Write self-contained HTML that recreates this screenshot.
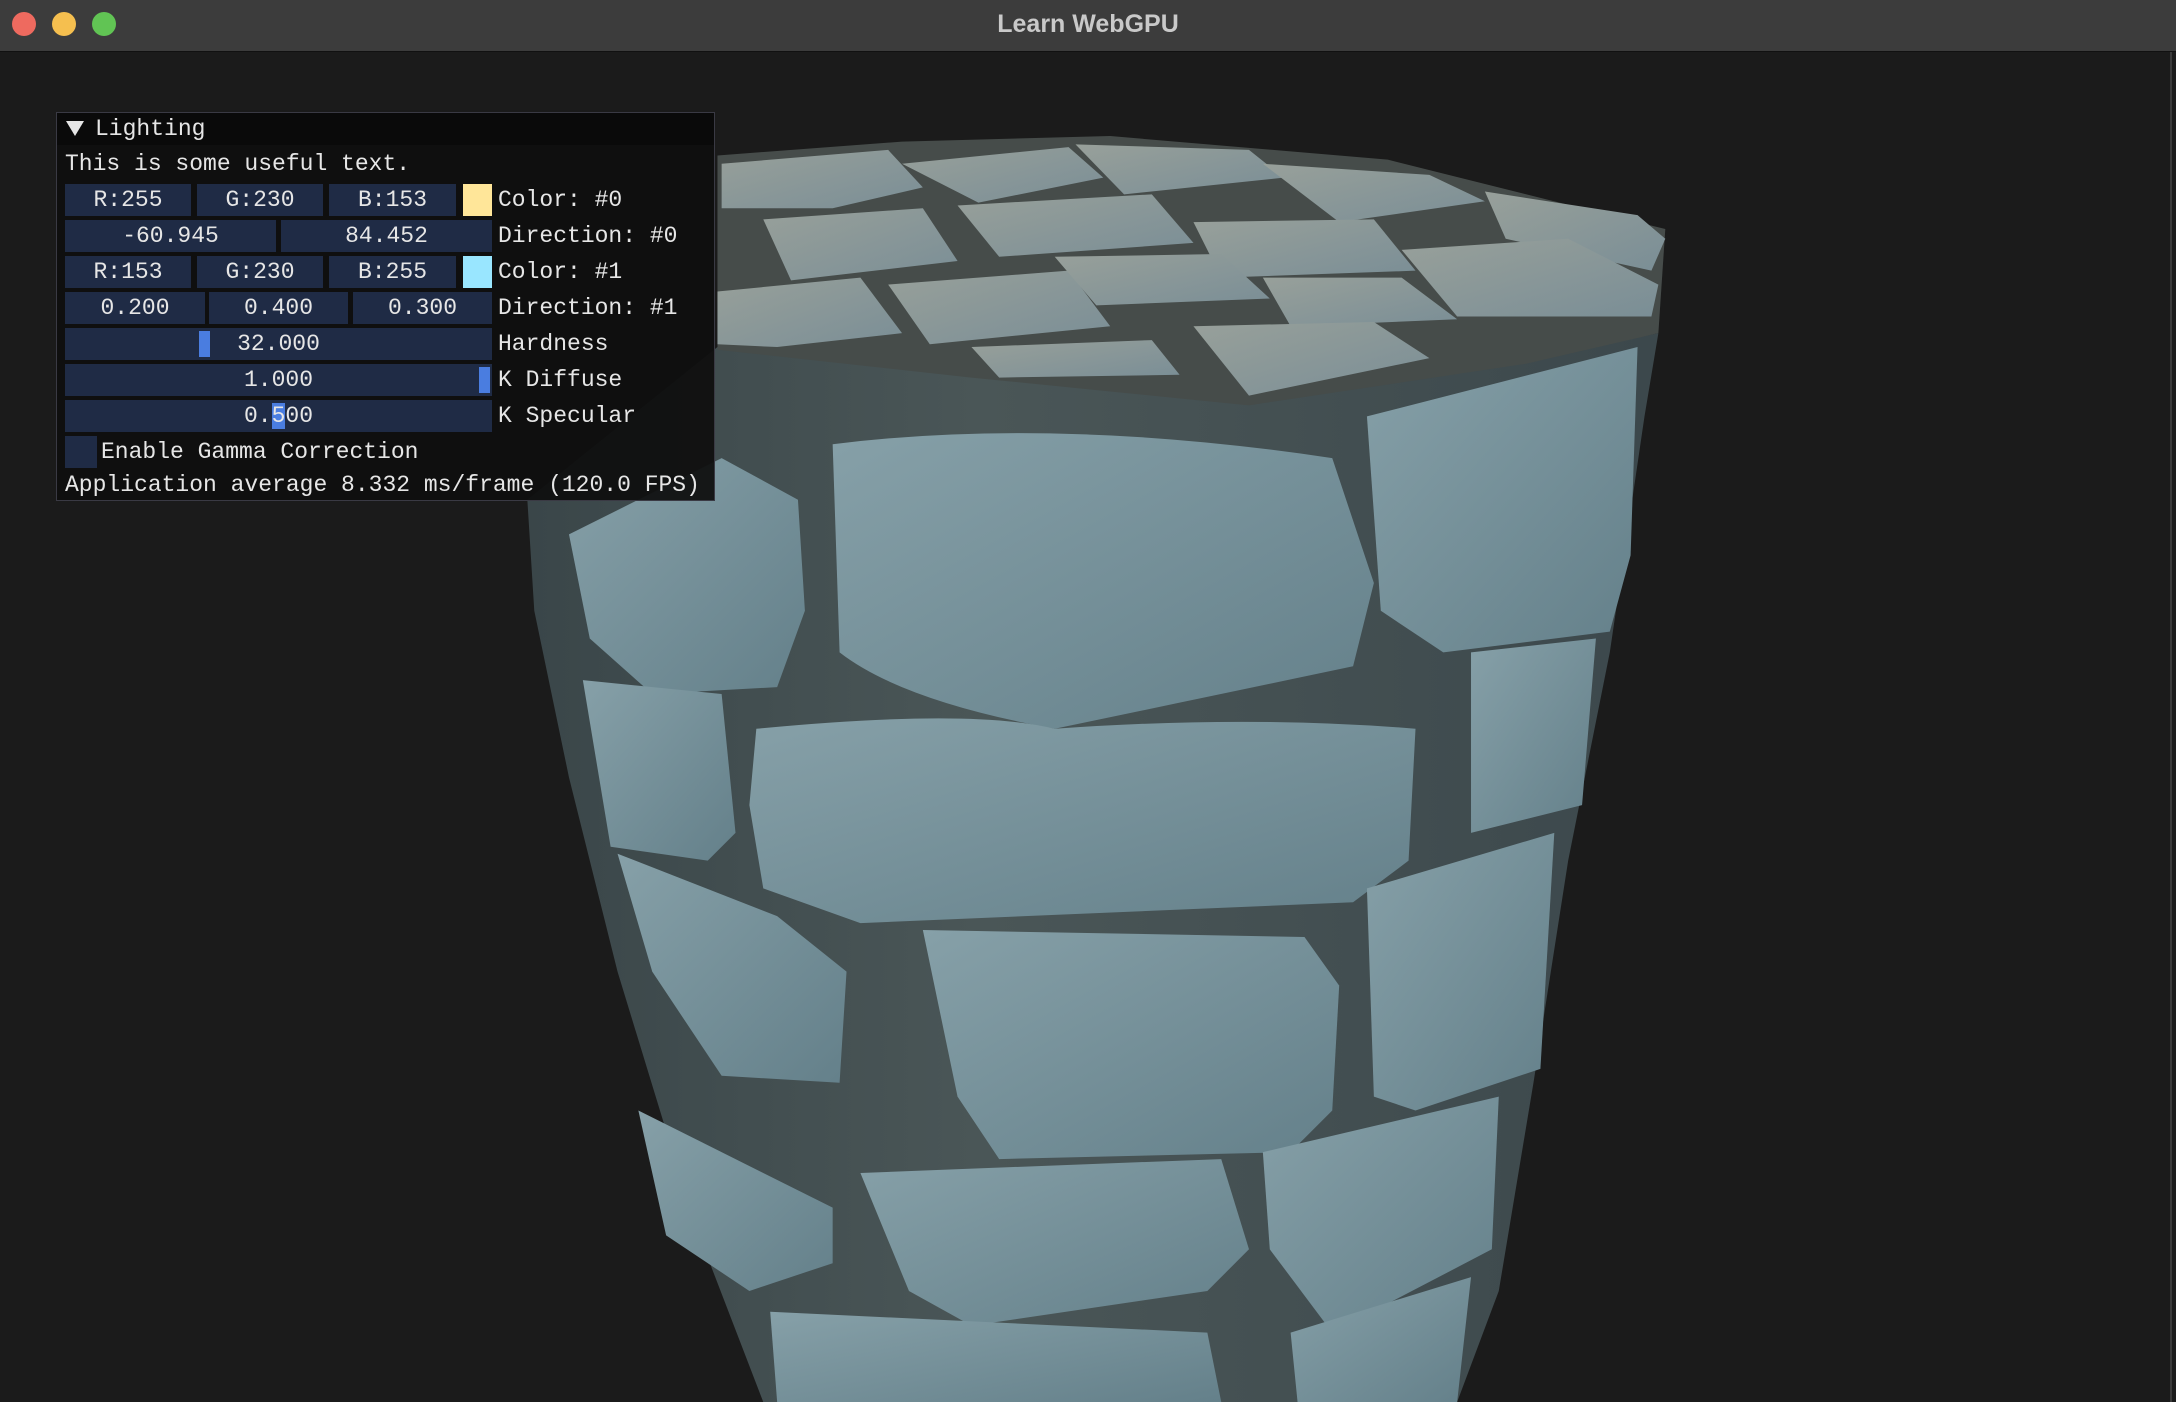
<!DOCTYPE html>
<html><head><meta charset="utf-8"><style>
html,body{margin:0;padding:0;width:2176px;height:1402px;overflow:hidden;background:#1b1b1b;}
.tb{position:absolute;left:0;top:0;width:2176px;height:51px;background:#3c3c3c;border-bottom:1px solid #111;}
.tb .t{position:absolute;left:0;width:2176px;top:10px;text-align:center;color:#c9c9c9;font:bold 25px "Liberation Sans",sans-serif;}
.dot{position:absolute;top:12px;width:24px;height:24px;border-radius:50%;}
svg.scene{position:absolute;left:0;top:0;}
.panel{position:absolute;left:56px;top:112px;width:659px;height:389px;background:rgba(15,15,15,0.94);border:1px solid #3a3a44;box-sizing:border-box;font:23px "Liberation Mono",monospace;color:#e6e6e6;}
.hd{position:absolute;left:0;top:0;width:100%;height:32px;background:#0a0a0a;}
.w{position:absolute;height:32px;background:#1f2b45;text-align:center;line-height:32px;white-space:pre;}
.l{position:absolute;line-height:32px;white-space:pre;}
</style></head><body>
<div class="tb">
<div class="dot" style="left:12px;background:#ee6a5f"></div>
<div class="dot" style="left:52px;background:#f5bf4f"></div>
<div class="dot" style="left:92px;background:#61c454"></div>
<div class="t">Learn WebGPU</div>
</div>
<div style="position:absolute;left:2170px;top:52px;width:2px;height:1350px;background:#3a3a3a"></div>
<svg class="scene" width="2176" height="1402" viewBox="0 0 1568 1010" preserveAspectRatio="none">
<defs>
<linearGradient id="body" x1="0" x2="1" y1="0" y2="0">
<stop offset="0" stop-color="#3a4649"/><stop offset="0.4" stop-color="#4a5657"/><stop offset="1" stop-color="#3c484c"/>
</linearGradient>
<linearGradient id="st" x1="0" x2="1" y1="0" y2="1">
<stop offset="0" stop-color="#86a0a8"/><stop offset="1" stop-color="#64808a"/>
</linearGradient>
<linearGradient id="ts" x1="0" x2="1" y1="0" y2="1">
<stop offset="0" stop-color="#98a09a"/><stop offset="1" stop-color="#7a8e96"/>
</linearGradient>
</defs>
<polygon points="380,360 517,250 700,270 900,290 1100,260 1195,240 1185,300 1160,470 1130,620 1105,780 1080,930 1050,1010 550,1010 500,880 445,700 410,560 385,440" fill="url(#body)"/>
<g fill="url(#st)">
<path d="M600,320 Q760,300 960,330 L990,420 975,480 Q880,500 760,525 Q650,505 605,470 Z"/>
<path d="M410,385 L520,330 575,360 580,440 560,495 470,500 425,460 Z"/>
<path d="M985,300 L1180,250 1175,400 1160,455 1040,470 995,440 Z"/>
<path d="M545,525 Q700,510 760,525 Q900,515 1020,525 L1015,620 975,650 620,665 550,640 540,580 Z"/>
<path d="M420,490 L520,500 530,600 510,620 440,610 Z"/>
<path d="M1060,470 L1150,460 1140,580 1060,600 Z"/>
<path d="M665,670 L940,675 965,710 960,800 930,830 720,835 690,790 Z"/>
<path d="M445,615 L560,660 610,700 605,780 520,775 470,700 Z"/>
<path d="M985,640 L1120,600 1110,770 1020,800 990,790 Z"/>
<path d="M620,845 L880,835 900,900 870,930 700,955 655,930 Z"/>
<path d="M460,800 L600,870 600,910 540,930 480,890 Z"/>
<path d="M910,830 L1080,790 1075,900 960,960 915,900 Z"/>
<path d="M555,945 L870,960 880,1010 560,1010 Z"/>
<path d="M930,960 L1060,920 1050,1010 935,1010 Z"/>
</g>
<polygon points="517,112 650,102 800,98 1000,115 1200,165 1195,240 1100,262 900,292 700,272 517,252" fill="#464c4a"/>
<g fill="url(#ts)">
<path d="M520,118 L640,108 665,135 600,150 520,150 Z"/>
<path d="M650,118 L770,106 795,128 705,146 Z"/>
<path d="M775,104 L900,108 925,128 810,140 Z"/>
<path d="M910,118 L1030,126 1070,145 965,160 Z"/>
<path d="M1070,138 L1180,155 1200,172 1190,195 1085,172 Z"/>
<path d="M550,158 L665,150 690,188 570,202 Z"/>
<path d="M690,148 L830,140 860,175 720,185 Z"/>
<path d="M860,160 L990,158 1020,195 880,200 Z"/>
<path d="M1010,180 L1130,172 1195,205 1190,228 1050,228 Z"/>
<path d="M517,210 L620,200 650,240 560,250 517,248 Z"/>
<path d="M640,205 L770,195 800,235 670,248 Z"/>
<path d="M760,185 L880,183 915,215 790,220 Z"/>
<path d="M910,200 L1010,200 1050,230 930,235 Z"/>
<path d="M860,235 L990,232 1030,258 900,285 Z"/>
<path d="M700,250 L830,245 850,270 720,272 Z"/>
</g>
</svg>
<div class="panel">
<div class="hd"></div>
<div style="position:absolute;left:9px;top:8px;width:0;height:0;border-left:9px solid transparent;border-right:9px solid transparent;border-top:15px solid #e6e6e6"></div>
<div class="l" style="left:38px;top:0">Lighting</div>
<div class="l" style="left:8px;top:35px">This is some useful text.</div>

<div class="w" style="left:8px;top:71px;width:126px">R:255</div>
<div class="w" style="left:140px;top:71px;width:126px">G:230</div>
<div class="w" style="left:272px;top:71px;width:127px">B:153</div>
<div style="position:absolute;left:406px;top:71px;width:29px;height:32px;background:#ffe699"></div>
<div class="l" style="left:441px;top:71px">Color: #0</div>

<div class="w" style="left:8px;top:107px;width:211px">-60.945</div>
<div class="w" style="left:224px;top:107px;width:211px">84.452</div>
<div class="l" style="left:441px;top:107px">Direction: #0</div>

<div class="w" style="left:8px;top:143px;width:126px">R:153</div>
<div class="w" style="left:140px;top:143px;width:126px">G:230</div>
<div class="w" style="left:272px;top:143px;width:127px">B:255</div>
<div style="position:absolute;left:406px;top:143px;width:29px;height:32px;background:#99e6ff"></div>
<div class="l" style="left:441px;top:143px">Color: #1</div>

<div class="w" style="left:8px;top:179px;width:140px">0.200</div>
<div class="w" style="left:152px;top:179px;width:139px">0.400</div>
<div class="w" style="left:296px;top:179px;width:139px">0.300</div>
<div class="l" style="left:441px;top:179px">Direction: #1</div>

<div class="w" style="left:8px;top:215px;width:427px">32.000</div>
<div style="position:absolute;left:142px;top:218px;width:11px;height:26px;background:#4a7de0"></div>
<div class="l" style="left:441px;top:215px">Hardness</div>

<div class="w" style="left:8px;top:251px;width:427px">1.000</div>
<div style="position:absolute;left:422px;top:254px;width:11px;height:26px;background:#4a7de0"></div>
<div class="l" style="left:441px;top:251px">K Diffuse</div>

<div class="w" style="left:8px;top:287px;width:427px">0.<span style="background:#4a7de0">5</span>00</div>
<div class="l" style="left:441px;top:287px">K Specular</div>

<div style="position:absolute;left:8px;top:323px;width:32px;height:32px;background:#1f2b45"></div>
<div class="l" style="left:44px;top:323px">Enable Gamma Correction</div>
<div class="l" style="left:8px;top:356px">Application average 8.332 ms/frame (120.0 FPS)</div>
</div>
</body></html>
